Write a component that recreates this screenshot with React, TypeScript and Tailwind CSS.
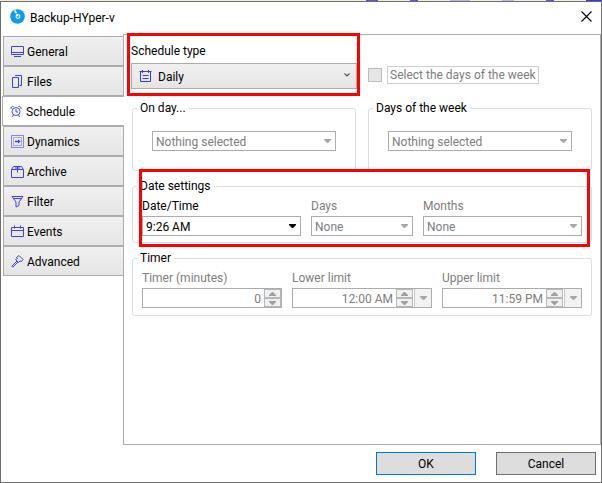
import { useId } from "react";
import type { ReactNode } from "react";

const tabs = ["General", "Files", "Schedule", "Dynamics", "Archive", "Filter", "Events", "Advanced"];

const tabIcons: Record<string, ReactNode> = {
  General: <path d="M.5 1.500h12v8H.5zM.5 7.500h12M3 11.500h7" />,
  Files: <path d="M1.500 2.500h6v10h-6zM4 .5h6.500v10H8.500" />,
  Schedule: (
    <>
      <circle cx="6" cy="6.500" r="4" />
      <path d="M6 4v3h2M1 4a2 2 0 0 1 2.500-2.500M8.500 1.500A2 2 0 0 1 11 4M3.500 10L2 12M8.500 10L10 12" />
    </>
  ),
  Dynamics: (
    <>
      <path d="M.5 .5h12v12H.5z" strokeOpacity=".6" />
      <path d="M2.500 2.500h8v8h-8z" strokeOpacity=".4" />
      <path d="M4 6.500h4.500" strokeWidth="1.500" />
      <path d="M7 4.500l2.500 2L7 8.500z" fill="#3a3af2" stroke="none" />
    </>
  ),
  Archive: <path d="M.5 4.500L2.500 1.500h8l2 3v8H.5zM.5 4.500h12M6.500 1.500v6M5 2v2.500M8 2v2.500" />,
  Filter: <path d="M1 1.500h11L8 7v3.500l-3 1.500V7zM2.500 3.500h8" />,
  Events: <path d="M.5 2.500h12v9H.5zM.5 5.500h12M3.500 .5v3M9.500 .5v3" />,
  Advanced: <path d="M5.500 2.500L8 .5l4 4-1.500 2-1.500-.5-1.500 1.500-3-3L6.500 3.500zM6 6L.8 11.200l1 1L7 7" />,
};

function TabIcon({ name }: { name: string }) {
  return (
    <svg width="13" height="13" viewBox="0 0 13 13" fill="none" stroke="#4040f2" strokeWidth="1" aria-hidden="true">
      {tabIcons[name]}
    </svg>
  );
}

function Group({ title, children }: { title: string; children: ReactNode }) {
  return (
    <fieldset className="min-w-0 rounded-[3px] border border-[#d5dfe5]">
      <legend className="ml-1 px-[3px] leading-4">{title}</legend>
      {children}
    </fieldset>
  );
}

function Arrow() {
  return (
    <svg width="7" height="4" viewBox="0 0 7 4" fill="currentColor" aria-hidden="true">
      <path d="M0 0h7v1L4 4H3L0 1z" />
    </svg>
  );
}

type ComboProps = { value: string; label?: string; ariaLabel?: string; disabled?: boolean };

function Combo({ value, label, ariaLabel, disabled }: ComboProps) {
  const id = useId();
  const tone = disabled ? "text-[#7d7d7d]" : "text-black";
  return (
    <div className="flex min-w-0 flex-col gap-0.5">
      {label && (
        <label htmlFor={id} className={`leading-4 ${tone}`}>
          {label}
        </label>
      )}
      <div className={`relative ${tone}`}>
        <select
          id={id}
          aria-label={ariaLabel}
          disabled={disabled}
          className="block h-5 w-full appearance-none border border-[#acacac] bg-white pl-[3px] pr-5 pt-px leading-4 opacity-100"
        >
          <option>{value}</option>
        </select>
        <span className={`pointer-events-none absolute inset-y-0 right-[5px] flex items-center ${disabled ? "text-[#a8a8a8]" : ""}`}>
          <Arrow />
        </span>
      </div>
    </div>
  );
}

function SpinButton({ label, up }: { label: string; up?: boolean }) {
  return (
    <button
      type="button"
      disabled
      aria-label={label}
      className="flex flex-1 items-center justify-center border border-[#b4b8bb] bg-[#f0f0f0] text-[#a0a0a0]"
    >
      <svg width="7" height="4" viewBox="0 0 7 4" fill="currentColor" aria-hidden="true">
        <path d={up ? "M0 4h7V3L4 0H3L0 3z" : "M0 0h7v1L4 4H3L0 1z"} />
      </svg>
    </button>
  );
}

function Spinner({ label, value, dropdown }: { label: string; value: string; dropdown?: boolean }) {
  const id = useId();
  return (
    <div className="flex min-w-0 flex-col gap-0.5 text-[#7d7d7d]">
      <label htmlFor={id} className="leading-4">
        {label}
      </label>
      <div className="flex h-5 border border-[#acacac] bg-white">
        <input id={id} disabled defaultValue={value} className="min-w-0 flex-1 bg-white pr-[3px] pt-px text-right leading-4" />
        <div className="flex w-[17px] flex-col">
          <SpinButton up label={`Increase ${label}`} />
          <SpinButton label={`Decrease ${label}`} />
        </div>
        {dropdown && (
          <button
            type="button"
            disabled
            aria-label={`Choose ${label}`}
            className="ml-px flex w-[17px] items-center justify-center border-l border-[#c8c8c8] bg-[#f2f2f2] text-[#a8a8a8]"
          >
            <Arrow />
          </button>
        )}
      </div>
    </div>
  );
}

export default function App() {
  return (
    <div className="flex min-h-screen flex-col bg-white font-[Roboto,'Open_Sans',sans-serif] text-[12px] leading-4 text-black">
      <div className="flex h-px justify-end gap-8 bg-[#f3ecdc]">
        <span className="w-3 bg-[#5a55f0]" />
        <span className="w-2 bg-[#5a55f0]" />
        <span className="w-5 bg-[#b9b3ee]" />
        <span className="w-3 bg-[#b9b3ee]" />
        <span className="w-2 bg-[#5a55f0]" />
        <span className="w-4 bg-[#3a35f5]" />
      </div>
      <div className="flex flex-1 flex-col border border-[#6e6e6e]">
        <header className="flex h-8 items-center px-[9px] pb-[3px]">
          <svg width="15" height="15" viewBox="0 0 16 16" aria-hidden="true">
            <circle cx="8" cy="8" r="7.800" fill="#109af5" />
            <path d="M5 1.500l2 3" stroke="#e8f5ff" strokeWidth="2" />
            <circle cx="8.500" cy="8" r="2" fill="#109af5" stroke="#e8f5ff" strokeWidth="1.200" />
            <path d="M7 5l1.500 3" stroke="#fff" strokeWidth="1" />
          </svg>
          <h1 className="ml-[5px] flex-1 pt-0.5">Backup-HYper-v</h1>
          <button type="button" aria-label="Close">
            <svg width="11" height="11" viewBox="0 0 11 11" stroke="#000" strokeWidth="1.100" aria-hidden="true">
              <path d="M.5 .5l10 10M10.500 .5l-10 10" />
            </svg>
          </button>
        </header>

        <div className="flex flex-1">
          <nav role="tablist" aria-label="Settings" className="ml-0.5 mt-0.5 flex w-[120px] shrink-0 flex-col">
            {tabs.map((name) => {
              const active = name === "Schedule";
              return (
                <button
                  key={name}
                  type="button"
                  role="tab"
                  aria-selected={active}
                  className={`flex h-[30px] items-center gap-[3px] border border-[#acacac] pl-[7px] pt-px ${
                    active ? "relative -ml-px -mr-px border-r-0 bg-white" : "border-r-0 bg-linear-to-b from-[#f0f0f0] to-[#e5e5e5]"
                  }`}
                >
                  <TabIcon name={name} />
                  {name}
                </button>
              );
            })}
          </nav>

          <main className="min-w-0 flex-1 border border-[#acacac] px-2 pt-2">
            <div className="grid grid-cols-2 gap-3">
              <div className="relative -mx-px flex flex-col gap-1">
                <label htmlFor="schedule-type">Schedule type</label>
                <div className="relative">
                  <select
                    id="schedule-type"
                    className="block h-[26px] w-full appearance-none border border-[#acacac] bg-linear-to-b from-[#f0f0f0] to-[#e5e5e5] pl-[26px] pt-px leading-4"
                  >
                    <option>Daily</option>
                  </select>
                  <svg width="13" height="13" viewBox="0 0 13 13" fill="none" stroke="#3a3af2" aria-hidden="true" className="pointer-events-none absolute left-2 top-[7px]">
                    <path d="M1.500 1.500h10v10h-10zM.5 1.500h12M3.500 0v3M9.500 0v3M3.500 5.500h6M3.500 8.500h6" />
                  </svg>
                  <svg width="6" height="4" viewBox="0 0 6 4" fill="none" stroke="#555" strokeWidth="1.200" aria-hidden="true" className="pointer-events-none absolute right-[7px] top-2.5">
                    <path d="M.5 .5L3 3 5.500 .5" />
                  </svg>
                </div>
                <div className="pointer-events-none absolute -bottom-[7px] -left-1 -right-[3px] -top-2.5 border-3 border-[#f00]" />
              </div>
              <div className="flex items-end pb-[5px]">
                <label className="flex items-center gap-[5px] text-[#7d7d7d]">
                  <input type="checkbox" disabled className="size-3.5 appearance-none border border-[#bcbcbc] bg-[#e6e6e6]" />
                  <span className="border border-[#cfcfcf] px-0.5">Select the days of the week</span>
                </label>
              </div>
            </div>

            <div className="mt-[11px] grid grid-cols-2 gap-3">
              {["On day...", "Days of the week"].map((title) => (
                <Group key={title} title={title}>
                  <div className="px-[19px] pb-[19px] pt-[15px]">
                    <Combo value="Nothing selected" ariaLabel={title} disabled />
                  </div>
                </Group>
              ))}
            </div>

            <div className="relative mt-[7px]">
              <Group title="Date settings">
                <div className="grid grid-cols-[159fr_102fr_159fr] gap-2.5 px-[9px] pb-1.5 pt-1">
                  <Combo label="Date/Time" value="9:26 AM" />
                  <Combo label="Days" value="None" disabled />
                  <Combo label="Months" value="None" disabled />
                </div>
              </Group>
              <div className="pointer-events-none absolute -bottom-1 -top-[9px] left-[7px] right-0.5 border-3 border-[#f00]" />
            </div>

            <div className="mt-[7px]">
              <Group title="Timer">
                <div className="grid grid-cols-3 gap-2.5 px-[9px] pb-[7px] pt-1">
                  <Spinner label="Timer (minutes)" value="0" />
                  <Spinner label="Lower limit" value="12:00 AM" dropdown />
                  <Spinner label="Upper limit" value="11:59 PM" dropdown />
                </div>
              </Group>
            </div>
          </main>
        </div>

        <footer className="flex justify-end gap-5 py-[7px] pr-[5px]">
          <button type="button" className="h-[23px] w-[100px] border border-[#0078d7] bg-[#ddd]">
            OK
          </button>
          <button type="button" className="h-[23px] w-[100px] border border-[#707070] bg-[#ddd]">
            Cancel
          </button>
        </footer>
      </div>
    </div>
  );
}
